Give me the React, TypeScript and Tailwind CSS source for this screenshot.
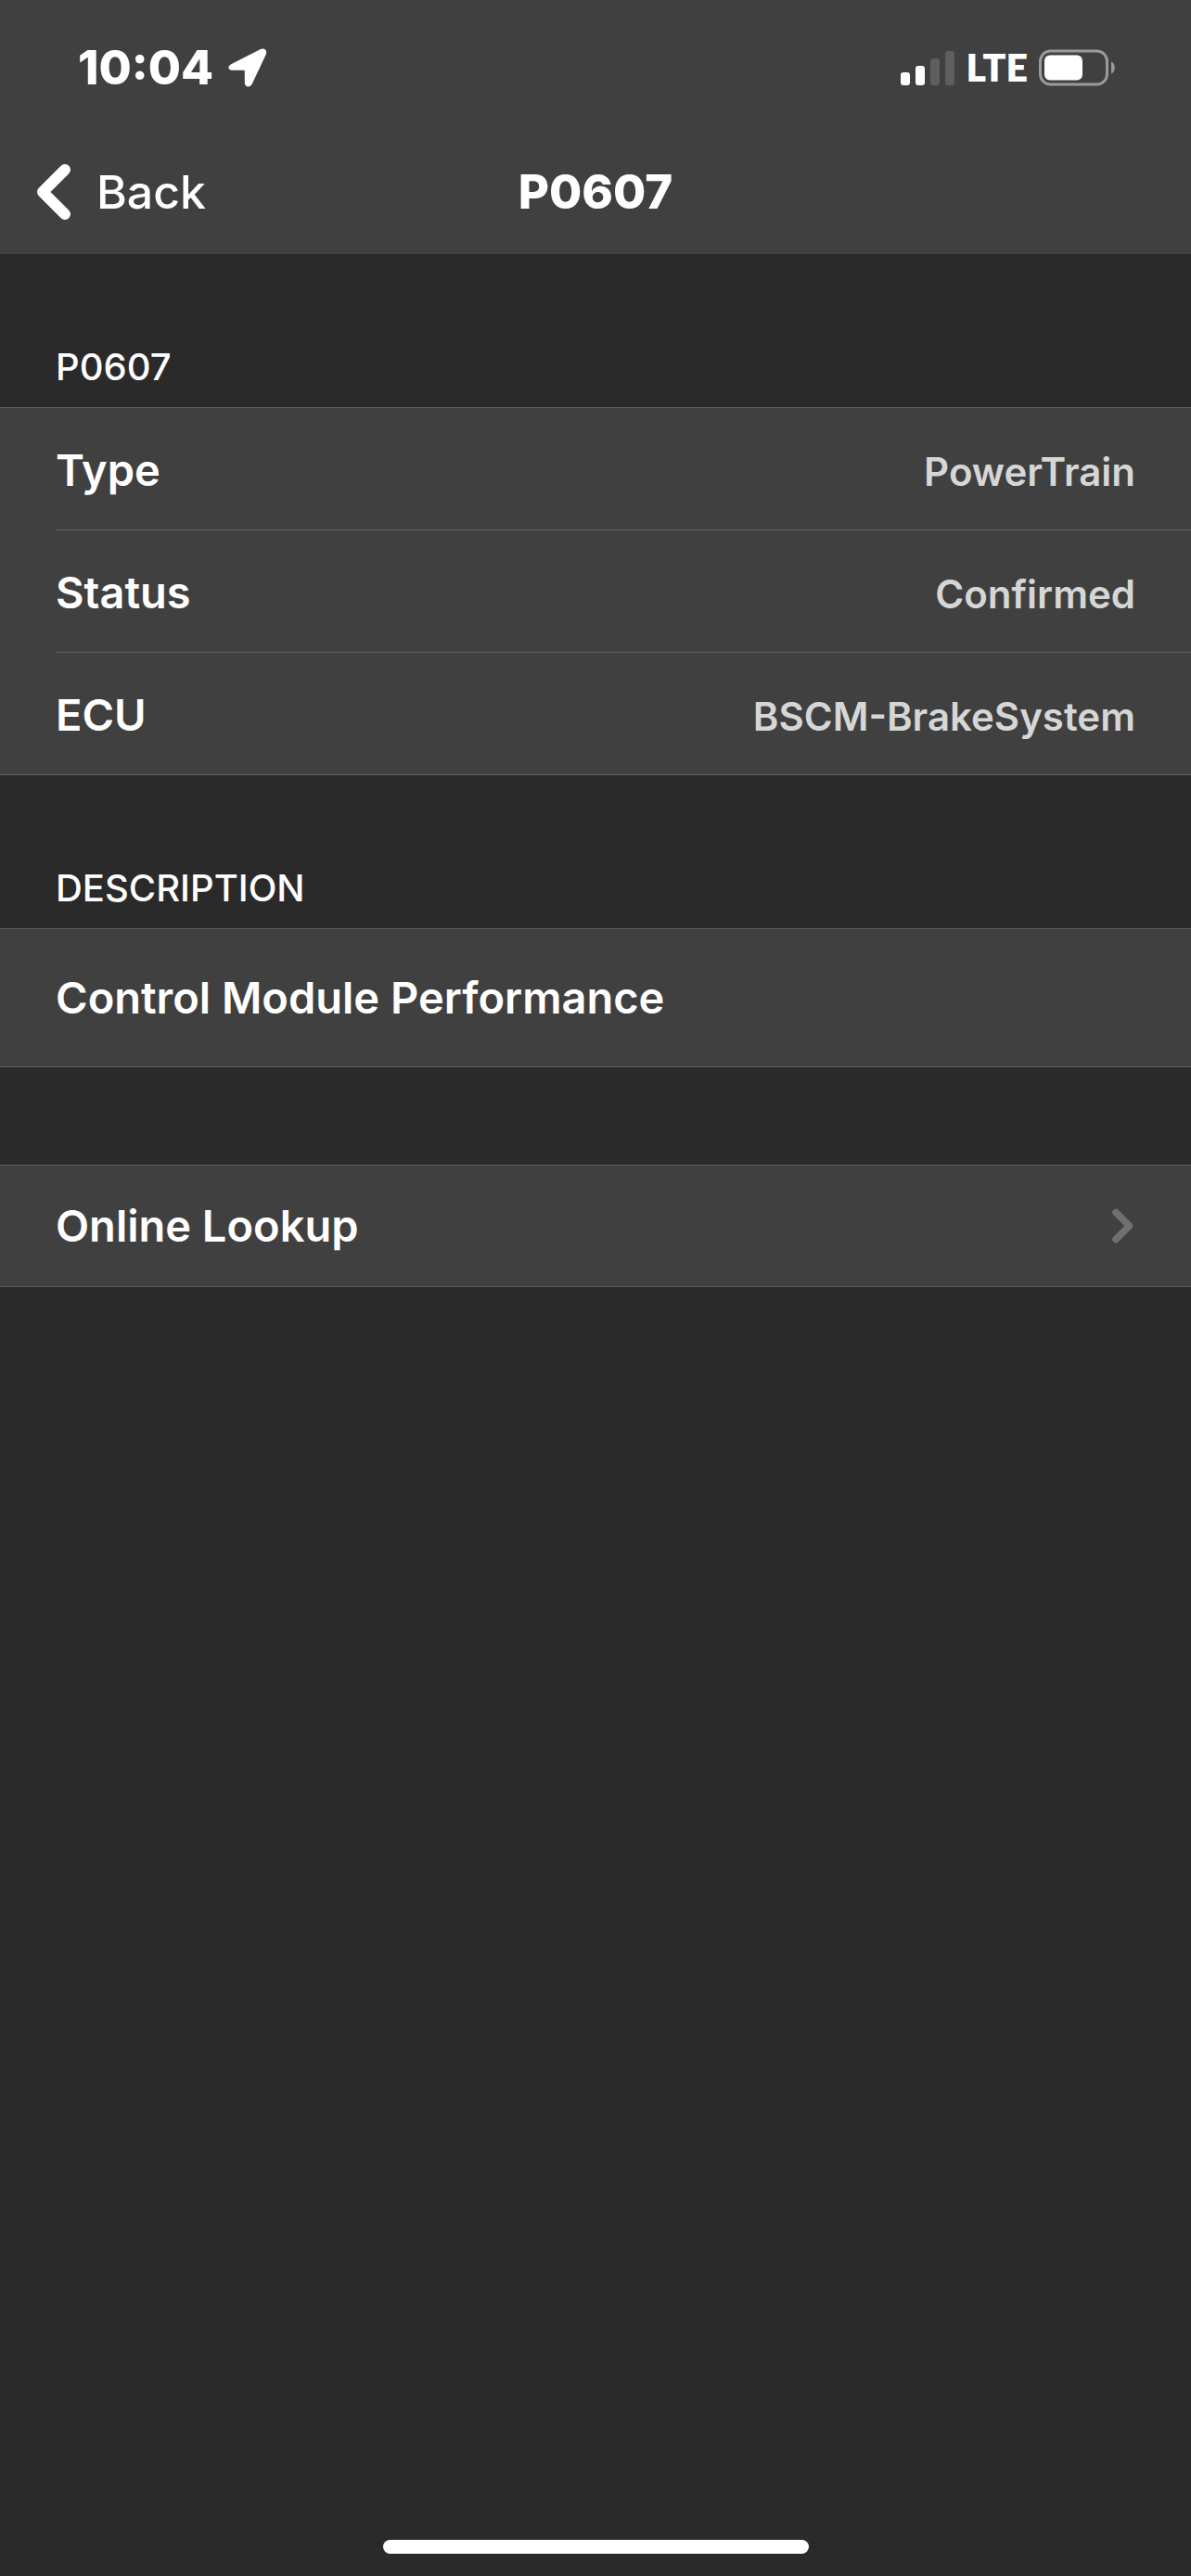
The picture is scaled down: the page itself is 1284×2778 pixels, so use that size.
/**
 * Trouble code detail screen: code info, description and a link to the online lookup.
 */
import type { ReactNode } from "react";

const CODE = "P0607";

const DETAILS = [
  { label: "Type", value: "PowerTrain" },
  { label: "Status", value: "Confirmed" },
  { label: "ECU", value: "BSCM-BrakeSystem" },
];

export default function App() {
  return (
    <div className="flex min-h-screen flex-col bg-[#2a2a2a] font-['Inter',sans-serif] font-medium text-white">
      <header className="bg-[#404040]">
        <StatusBar />
        <NavBar title={CODE} />
      </header>

      <main className="flex-1">
        <section aria-labelledby="code-title">
          <SectionTitle id="code-title">{CODE}</SectionTitle>
          <dl className="border-b border-[#5e5e5e] bg-[#404040]">
            {DETAILS.map((d) => (
              <Row key={d.label} label={d.label} value={d.value} />
            ))}
          </dl>
        </section>

        <section aria-labelledby="description-title">
          <SectionTitle id="description-title">DESCRIPTION</SectionTitle>
          <p className="border-y border-[#5e5e5e] bg-[#404040] px-[60px] py-11 text-[47px] leading-[60px] font-semibold">
            Control Module Performance
          </p>
        </section>

        <a
          href="#lookup"
          className="mt-[105px] flex items-center justify-between border-y border-[#5e5e5e] bg-[#404040] px-[60px] py-[35px] text-[47px] leading-[60px] font-semibold"
        >
          Online Lookup
          <svg width="26" height="38" viewBox="0 0 26 38" fill="none" aria-hidden="true">
            <path
              d="M5 4.5 19.5 19 5 33.5"
              stroke="#707070"
              strokeWidth="7.5"
              strokeLinecap="round"
              strokeLinejoin="round"
            />
          </svg>
        </a>
      </main>

      <footer className="flex justify-center pb-6">
        <div className="h-[15px] w-[459px] rounded-full bg-white" />
      </footer>
    </div>
  );
}

function StatusBar() {
  return (
    <div className="flex h-[146px] items-center justify-between pr-20 pl-[84px]">
      <div className="flex items-center gap-4">
        <span className="text-[51px] leading-[60px] font-extrabold">10:04</span>
        <svg width="42" height="42" viewBox="0 0 42 42" fill="white" aria-hidden="true">
          <path
            d="M3.2 17.2 34.5 1.2C39 -.8 42.6 2.6 40.6 7L25.8 38.6C23.8 43 17.8 42 17.8 37.2V24.6Q17.8 23.8 17 23.8H4.5C-.4 23.8-1 19.2 3.2 17.2Z"
          />
        </svg>
      </div>

      <div className="flex items-center">
        <svg width="58" height="38" viewBox="0 0 58 38" fill="white" aria-hidden="true">
          <rect x="0" y="24" width="10" height="14" rx="3" />
          <rect x="16" y="17" width="10" height="21" rx="3" />
          <rect x="32" y="9" width="10" height="29" rx="3" fill="#5e5e5e" />
          <rect x="48" y="1" width="10" height="37" rx="3" fill="#5e5e5e" />
        </svg>
        <span className="ml-3 font-['Lato',sans-serif] text-[41px] leading-[60px] font-extrabold">LTE</span>
        <svg className="ml-3" width="84" height="40" viewBox="0 0 84 40" aria-hidden="true">
          <rect x="1.5" y="2" width="72" height="36" rx="11" fill="none" stroke="#9b9b9b" strokeWidth="3" />
          <rect x="6" y="6.5" width="41" height="27" rx="6" fill="white" />
          <path d="M78 13.5C83 15.5 83 24.5 78 26.5Z" fill="#9b9b9b" />
        </svg>
      </div>
    </div>
  );
}

function NavBar({ title }: { title: string }) {
  return (
    <div className="grid h-32 grid-cols-[1fr_auto_1fr] items-center px-10 pb-1.5">
      <button type="button" className="flex items-center gap-7 justify-self-start text-[50px] leading-[60px]">
        <svg width="36" height="60" viewBox="0 0 36 60" fill="none" aria-hidden="true">
          <path
            d="M30 6 6 30 30 54"
            stroke="white"
            strokeWidth="12"
            strokeLinecap="round"
            strokeLinejoin="round"
          />
        </svg>
        Back
      </button>
      <h1 className="text-[51px] leading-[60px] font-extrabold">{title}</h1>
    </div>
  );
}

function SectionTitle({ id, children }: { id: string; children: ReactNode }) {
  return (
    <h2 id={id} className="px-[60px] pt-[97px] pb-[18px] text-[40px] leading-[50px]">
      {children}
    </h2>
  );
}

function Row({ label, value }: { label: string; value: string }) {
  return (
    <div className="group border-[#5e5e5e] pl-[60px] first:border-t">
      <div className="flex items-baseline justify-between border-t border-[#5e5e5e] pt-[37px] pr-[60px] pb-8 group-first:border-t-0">
        <dt className="text-[47px] leading-[60px] font-semibold">{label}</dt>
        <dd className="text-[42px] leading-[60px] font-semibold text-[#d6d6d6]">{value}</dd>
      </div>
    </div>
  );
}
